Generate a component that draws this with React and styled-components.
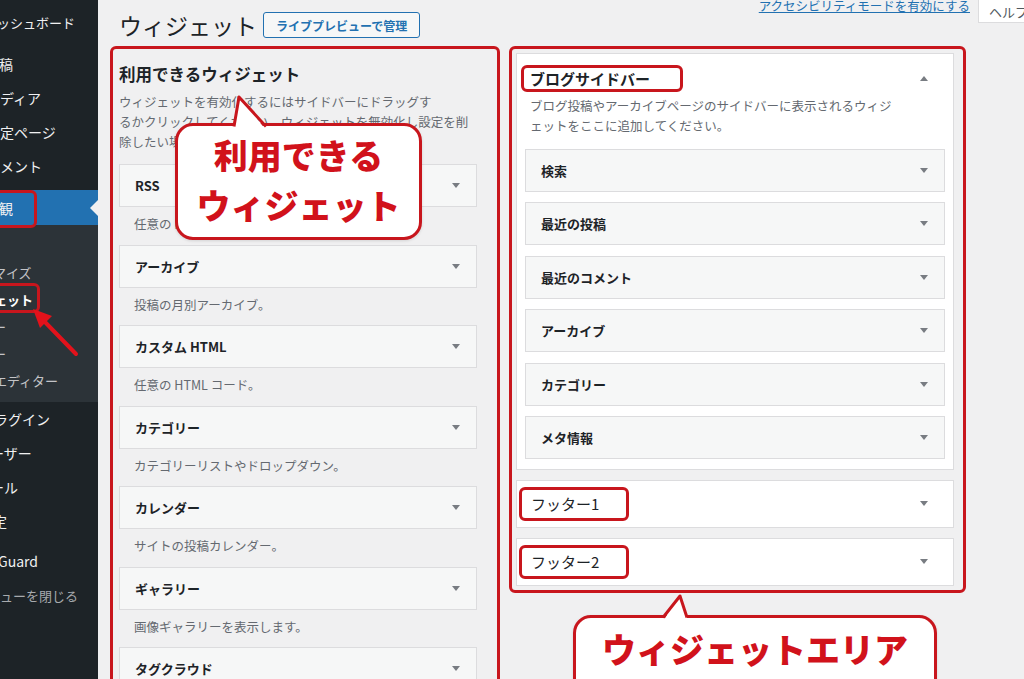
import styled, { createGlobalStyle } from 'styled-components';

const RED = '#c8161d';
const TEXT_RED = '#d1121b';

const GlobalStyle = createGlobalStyle`
  html, body {
    margin: 0;
    padding: 0;
  }

  body {
    width: 1024px;
    height: 679px;
    overflow: hidden;
    background: #f0f0f1;
    color: #1d2327;
    font-family: "Noto Sans CJK JP", "Noto Sans", sans-serif;
  }

  * {
    box-sizing: border-box;
  }
`;

const Page = styled.div`
  display: flex;
  width: 1024px;
  height: 679px;
  overflow: hidden;
`;

/* ---------- admin sidebar (cropped on the left) ---------- */

const Sidebar = styled.nav`
  position: relative;
  flex: 0 0 98px;
  background: #1d2327;
  overflow: hidden;
`;

const MenuList = styled.ul`
  list-style: none;
  margin: 0;
  padding: 5px 0 0;
`;

const MenuItem = styled.li`
  position: relative;
  display: flex;
  align-items: center;
  height: ${({ $current }) => ($current ? 35 : 34)}px;
  margin-top: ${({ $gap }) => $gap || 0}px;
  background: ${({ $current }) => ($current ? '#2271b1' : 'transparent')};
  color: ${({ $muted }) => ($muted ? '#a7aaad' : '#f0f0f1')};
  font-size: ${({ $size }) => $size || 14}px;
  white-space: nowrap;

  &::after {
    content: '';
    display: ${({ $current }) => ($current ? 'block' : 'none')};
    position: absolute;
    right: 0;
    top: 50%;
    margin-top: -8px;
    border-top: 8px solid transparent;
    border-bottom: 8px solid transparent;
    border-right: 8px solid #f0f0f1;
  }
`;

const MenuLabel = styled.span`
  margin-left: ${({ $offset }) => $offset}px;
`;

const SubMenu = styled.ul`
  list-style: none;
  margin: 0;
  padding: 7px 0 8px;
  background: #2c3338;
`;

const SubItem = styled.li`
  display: flex;
  align-items: center;
  height: 27px;
  font-size: 13px;
  white-space: nowrap;
  color: ${({ $current }) => ($current ? '#ffffff' : '#c3c4c7')};
  font-weight: ${({ $current }) => ($current ? 700 : 400)};
`;

const MenuMark = styled.div`
  position: absolute;
  left: -10px;
  top: ${({ $top }) => $top}px;
  width: ${({ $width }) => $width}px;
  height: ${({ $height }) => $height}px;
  border: 3px solid ${RED};
  border-radius: 6px;
`;

const PointerArrow = styled.svg`
  position: absolute;
  left: 0;
  top: 0;
`;

/* ---------- main area ---------- */

const Main = styled.main`
  flex: 1;
  min-width: 0;
  display: flex;
  flex-direction: column;
  padding-left: 12px;
`;

const Header = styled.header`
  flex: 0 0 46px;
  display: flex;
  justify-content: space-between;
  align-items: flex-start;
  height: 46px;
`;

const TitleGroup = styled.div`
  display: flex;
  align-items: center;
  gap: 6px;
  padding: 10px 0 0 9px;
`;

const Title = styled.h1`
  margin: 0;
  font-size: 23px;
  font-weight: 400;
  line-height: 30px;
  color: #1d2327;
`;

const PreviewButton = styled.span`
  display: inline-flex;
  align-items: center;
  height: 26px;
  padding: 0 12px;
  border: 1px solid #2271b1;
  border-radius: 3px;
  background: #f6f7f7;
  color: #2271b1;
  font-size: 12px;
  font-weight: 700;
  white-space: nowrap;
`;

const ScreenMeta = styled.div`
  display: flex;
  align-items: flex-start;
  gap: 8px;
  margin-right: -34px;
`;

const A11yLink = styled.a`
  margin-top: -2px;
  color: #2271b1;
  font-size: 12.5px;
  line-height: 16px;
  text-decoration: underline;
  white-space: nowrap;
`;

const HelpTab = styled.div`
  display: flex;
  align-items: center;
  width: 80px;
  height: 23px;
  padding: 0 10px;
  background: #ffffff;
  border: 1px solid #dcdcde;
  border-top: 0;
  color: #50575e;
  font-size: 13px;
  white-space: nowrap;
`;

const Columns = styled.div`
  flex: 0 0 auto;
  display: flex;
  align-items: flex-start;
  gap: 9px;
`;

/* ---------- available widgets ---------- */

const AvailableFrame = styled.section`
  position: relative;
  width: 390px;
  padding: 13px 20px 0 6px;
  border: 3px solid ${RED};
  border-radius: 6px;
`;

const SectionHeading = styled.h2`
  margin: 0;
  font-size: 16.5px;
  font-weight: 700;
  line-height: 24px;
  color: #1d2327;
`;

const HelpText = styled.p`
  margin: ${({ $margin }) => $margin};
  padding-left: ${({ $indent }) => $indent || 0}px;
  font-size: 12.5px;
  line-height: 20px;
  color: #646970;
  white-space: nowrap;
`;

const WidgetRow = styled.div`
  display: flex;
  align-items: center;
  justify-content: space-between;
  height: 43px;
  padding: 0 16px 0 15px;
  background: #f6f7f7;
  border: 1px solid #dcdcde;
  font-size: 13px;
  font-weight: 700;
  color: #1d2327;
  white-space: nowrap;
`;

const WidgetDesc = styled.div`
  padding: 8px 0 11.5px 15px;
  font-size: 12.5px;
  line-height: 18px;
  color: #646970;
  white-space: nowrap;
`;

const Caret = styled.span`
  flex: 0 0 auto;
  width: 0;
  height: 0;
  border-left: 4px solid transparent;
  border-right: 4px solid transparent;
  border-top: ${({ $up }) => ($up ? '0' : '5px solid #787c82')};
  border-bottom: ${({ $up }) => ($up ? '5px solid #787c82' : '0')};
`;

/* ---------- widget areas ---------- */

const AreaColumn = styled.div`
  display: flex;
  flex-direction: column;
  align-items: flex-start;
`;

const AreaFrame = styled.section`
  display: flex;
  flex-direction: column;
  gap: 10px;
  width: 457px;
  padding: 4px 9px 4px 4px;
  border: 3px solid ${RED};
  border-radius: 6px;
`;

const SidebarBox = styled.div`
  padding: 12px 8px 10px;
  background: #ffffff;
  border: 1px solid #dcdcde;
`;

const AreaTitleRow = styled.div`
  display: flex;
  align-items: center;
  justify-content: space-between;
  height: 24px;
  padding: 0 17px 0 5px;
`;

const AreaTitleMark = styled.span`
  display: inline-flex;
  align-items: center;
  width: 162px;
  height: 27px;
  margin-left: -9px;
  padding-left: 6px;
  border: 3px solid ${RED};
  border-radius: 6px;
  font-size: 15px;
  font-weight: 700;
  white-space: nowrap;
`;

const InnerRows = styled.div`
  display: flex;
  flex-direction: column;
  gap: 10.4px;
`;

const FooterBox = styled.div`
  display: flex;
  align-items: center;
  justify-content: space-between;
  height: 48px;
  padding: 0 25px 0 14px;
  background: #ffffff;
  border: 1px solid #dcdcde;
`;

const FooterMark = styled.span`
  display: inline-flex;
  align-items: center;
  width: 110px;
  height: 34px;
  margin-left: -12px;
  padding-left: 9px;
  border: 3px solid ${RED};
  border-radius: 6px;
  font-size: 15px;
  color: #1d2327;
  white-space: nowrap;
`;

/* ---------- callouts ---------- */

const Bubble = styled.div`
  position: ${({ $floating }) => ($floating ? 'absolute' : 'relative')};
  left: ${({ $floating }) => ($floating ? '62px' : 'auto')};
  top: ${({ $floating }) => ($floating ? '74px' : 'auto')};
  width: ${({ $width }) => $width}px;
  height: ${({ $height }) => $height}px;
  margin: ${({ $margin }) => $margin || 0};
  padding-top: ${({ $padTop }) => $padTop}px;
  background: #ffffff;
  border: 3px solid ${RED};
  border-radius: 18px;
  color: ${TEXT_RED};
  font-size: 34px;
  font-weight: 900;
  line-height: ${({ $line }) => $line}px;
  text-align: center;
  white-space: nowrap;
  box-shadow: 0 1px 3px rgba(0, 0, 0, 0.12);
`;

const Tail = styled.svg`
  position: absolute;
  left: ${({ $left }) => $left}px;
  top: ${({ $top }) => $top}px;
  overflow: visible;
`;

const available = [
  { name: 'RSS', desc: '任意の RSS または Atom フィードのエントリー。' },
  { name: 'アーカイブ', desc: '投稿の月別アーカイブ。' },
  { name: 'カスタム HTML', desc: '任意の HTML コード。' },
  { name: 'カテゴリー', desc: 'カテゴリーリストやドロップダウン。' },
  { name: 'カレンダー', desc: 'サイトの投稿カレンダー。' },
  { name: 'ギャラリー', desc: '画像ギャラリーを表示します。' },
  { name: 'タグクラウド', desc: 'よく使われているタグのクラウド。' },
];

const sidebarWidgets = ['検索', '最近の投稿', '最近のコメント', 'アーカイブ', 'カテゴリー', 'メタ情報'];

const App = () => (
  <>
    <GlobalStyle />
    <Page>
      <Sidebar>
        <MenuList>
          <MenuItem $size={13}>
            <MenuLabel $offset={-16}>ダッシュボード</MenuLabel>
          </MenuItem>
          <MenuItem $gap={8}>
            <MenuLabel $offset={-15}>投稿</MenuLabel>
          </MenuItem>
          <MenuItem>
            <MenuLabel $offset={-14}>メディア</MenuLabel>
          </MenuItem>
          <MenuItem>
            <MenuLabel $offset={-14}>固定ページ</MenuLabel>
          </MenuItem>
          <MenuItem>
            <MenuLabel $offset={-14}>コメント</MenuLabel>
          </MenuItem>
          <MenuItem $gap={7} $current>
            <MenuLabel $offset={-15}>外観</MenuLabel>
          </MenuItem>
          <SubMenu>
            <SubItem>
              <MenuLabel $offset={-49}>テーマ</MenuLabel>
            </SubItem>
            <SubItem>
              <MenuLabel $offset={-46}>カスタマイズ</MenuLabel>
            </SubItem>
            <SubItem $current>
              <MenuLabel $offset={-45}>ウィジェット</MenuLabel>
            </SubItem>
            <SubItem>
              <MenuLabel $offset={-46}>メニュー</MenuLabel>
            </SubItem>
            <SubItem>
              <MenuLabel $offset={-46}>ヘッダー</MenuLabel>
            </SubItem>
            <SubItem>
              <MenuLabel $offset={-45}>テーマエディター</MenuLabel>
            </SubItem>
          </SubMenu>
          <MenuItem>
            <MenuLabel $offset={-20}>プラグイン</MenuLabel>
          </MenuItem>
          <MenuItem>
            <MenuLabel $offset={-24}>ユーザー</MenuLabel>
          </MenuItem>
          <MenuItem>
            <MenuLabel $offset={-24}>ツール</MenuLabel>
          </MenuItem>
          <MenuItem>
            <MenuLabel $offset={-21}>設定</MenuLabel>
          </MenuItem>
          <MenuItem $gap={6}>
            <MenuLabel $offset={-27}>SiteGuard</MenuLabel>
          </MenuItem>
          <MenuItem $muted $size={13}>
            <MenuLabel $offset={-26}>メニューを閉じる</MenuLabel>
          </MenuItem>
        </MenuList>

        <MenuMark $top={190} $width={47} $height={38} />
        <MenuMark $top={283} $width={50} $height={30} />
        <PointerArrow width="98" height="400" viewBox="0 0 98 400">
          <line x1="76" y1="354" x2="44" y2="321" stroke="#e3121b" strokeWidth="4" strokeLinecap="round" />
          <polygon points="33,309 52,316 40,328" fill="#e3121b" />
        </PointerArrow>
      </Sidebar>

      <Main>
        <Header>
          <TitleGroup>
            <Title>ウィジェット</Title>
            <PreviewButton>ライブプレビューで管理</PreviewButton>
          </TitleGroup>
          <ScreenMeta>
            <A11yLink>アクセシビリティモードを有効にする</A11yLink>
            <HelpTab>ヘルプ ▼</HelpTab>
          </ScreenMeta>
        </Header>

        <Columns>
          <AvailableFrame>
            <SectionHeading>利用できるウィジェット</SectionHeading>
            <HelpText $margin="6px 0 12px">
              ウィジェットを有効化するにはサイドバーにドラッグす
              <br />
              るかクリックしてください。ウィジェットを無効化し設定を削
              <br />
              除したい場合は、ドラッグして戻してください。
            </HelpText>
            {available.map(({ name, desc }) => (
              <div key={name}>
                <WidgetRow>
                  {name}
                  <Caret />
                </WidgetRow>
                <WidgetDesc>{desc}</WidgetDesc>
              </div>
            ))}

            <Bubble $floating $width={247} $height={117} $padTop={4} $line={50}>
              <Tail $left={50} $top={-31} width="45" height="36" viewBox="0 0 45 36">
                <polygon points="6,35 11,2 38,35" fill="#ffffff" />
                <polyline points="6,31.5 11,2 38,31.5" fill="none" stroke={RED} strokeWidth="3" strokeLinejoin="round" />
              </Tail>
              利用できる
              <br />
              ウィジェット
            </Bubble>
          </AvailableFrame>

          <AreaColumn>
            <AreaFrame>
              <SidebarBox>
                <AreaTitleRow>
                  <AreaTitleMark>ブログサイドバー</AreaTitleMark>
                  <Caret $up />
                </AreaTitleRow>
                <HelpText $margin="6px 0 13px" $indent={5}>
                  ブログ投稿やアーカイブページのサイドバーに表示されるウィジ
                  <br />
                  ェットをここに追加してください。
                </HelpText>
                <InnerRows>
                  {sidebarWidgets.map((name) => (
                    <WidgetRow key={name}>
                      {name}
                      <Caret />
                    </WidgetRow>
                  ))}
                </InnerRows>
              </SidebarBox>
              <FooterBox>
                <FooterMark>フッター1</FooterMark>
                <Caret />
              </FooterBox>
              <FooterBox>
                <FooterMark>フッター2</FooterMark>
                <Caret />
              </FooterBox>
            </AreaFrame>

            <Bubble $width={364} $height={90} $margin="22px 0 0 64px" $padTop={8} $line={46}>
              <Tail $left={84} $top={-24} width="30" height="28" viewBox="0 0 30 28">
                <polygon points="3,27 20,2 28,27" fill="#ffffff" />
                <polyline points="3,23.5 20,2 27,23.5" fill="none" stroke={RED} strokeWidth="3" strokeLinejoin="round" />
              </Tail>
              ウィジェットエリア
            </Bubble>
          </AreaColumn>
        </Columns>
      </Main>
    </Page>
  </>
);

export default App;
